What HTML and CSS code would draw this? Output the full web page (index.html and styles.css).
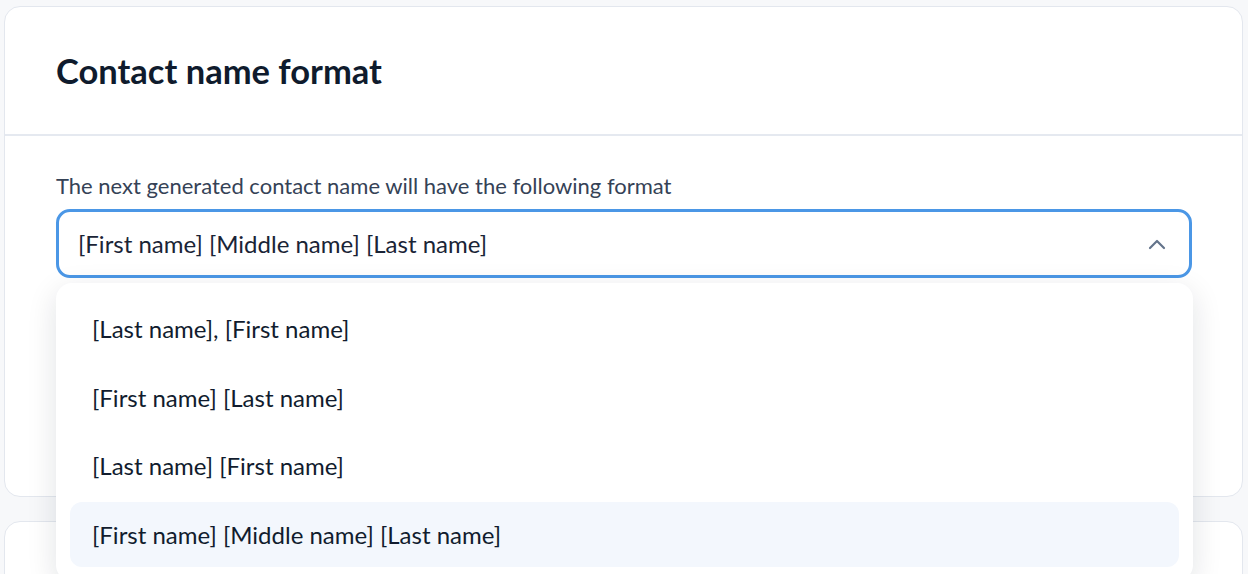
FILE: index.html
```html
<!DOCTYPE html>
<html lang="en">
<head>
  <meta charset="UTF-8" />
  <meta name="viewport" content="width=device-width, initial-scale=1.0"/>
  <title>Contact name format</title>
  <link rel="stylesheet" href="styles.css">
</head>
<body>
  <main class="page">
    <section class="card">
      <div class="card-header">
        <h2>Contact name format</h2>
      </div>
      <div class="card-body">
        <label class="field-label">The next generated contact name will have the following format</label>
        <div class="select">
          <div class="select-box">
            <span>[First name] [Middle name] [Last name]</span>
            <svg class="chevron" width="20" height="12" viewBox="0 0 20 12">
              <polyline points="3,10 10,3 17,10" fill="none" stroke="#64748b" stroke-width="2.2" stroke-linecap="round" stroke-linejoin="round"/>
            </svg>
          </div>
          <ul class="dropdown">
            <li>[Last name], [First name]</li>
            <li>[First name] [Last name]</li>
            <li>[Last name] [First name]</li>
            <li class="active">[First name] [Middle name] [Last name]</li>
          </ul>
        </div>
      </div>
    </section>

    <section class="card">
      <div class="card-header">
        <h2>Contact ID format</h2>
      </div>
    </section>
  </main>
</body>
</html>
```

FILE: styles.css
```css
* {
  margin: 0;
  padding: 0;
  box-sizing: border-box;
  font-family: 'Lato', sans-serif;
}

body {
  background: #f7f8fa;
  color: #0f1b2d;
  overflow: hidden;
}

.page {
  display: flex;
  flex-direction: column;
  gap: 24px;
  padding: 6px 5px 0 4px;
}

.card {
  background: #fff;
  border: 1px solid #e3e7ee;
  border-radius: 16px;
}

.card-header {
  height: 129px;
  display: flex;
  align-items: center;
  padding: 0 51px;
  border-bottom: 2px solid #e5e9f0;
}

.card-header h2 {
  font-size: 34.5px;
  font-weight: 700;
  color: #0f1b2d;
}

.card-body {
  padding: 36px 50px 0 51px;
  height: 360px;
}

.field-label {
  display: block;
  font-size: 22px;
  line-height: 28px;
  color: #354256;
  margin-bottom: 9px;
}

.select {
  position: relative;
}

.select-box {
  height: 69px;
  border: 3px solid #4b97e6;
  border-radius: 14px;
  display: flex;
  align-items: center;
  justify-content: space-between;
  padding: 0 22px 0 19px;
  font-size: 24px;
  color: #1a2436;
}

.dropdown {
  position: absolute;
  top: 74px;
  left: 0;
  right: -1px;
  list-style: none;
  background: #fff;
  border-radius: 16px;
  padding: 13px 14px 14px;
  display: flex;
  flex-direction: column;
  gap: 3.5px;
  box-shadow: 0 8px 30px rgba(15, 27, 45, 0.12);
}

.dropdown li {
  height: 65px;
  display: flex;
  align-items: center;
  padding: 0 22px;
  border-radius: 12px;
  font-size: 24px;
  color: #111c2e;
}

.dropdown li.active {
  background: #f3f7fd;
}
```
